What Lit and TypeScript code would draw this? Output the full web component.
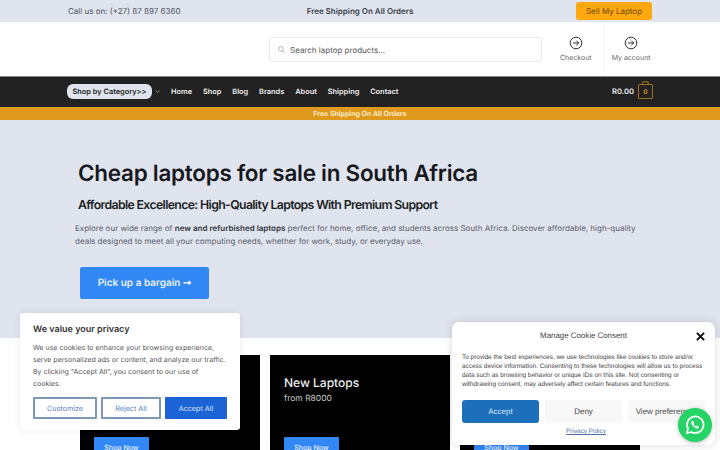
import { LitElement, html, css, svg } from 'lit';
import { customElement } from 'lit/decorators.js';

const circleArrow = svg`<circle cx="12" cy="12" r="10" fill="none" stroke="#333" stroke-width="1.7"/><path d="M7.5 12h9M13 8.5l3.5 3.5-3.5 3.5" fill="none" stroke="#333" stroke-width="1.7" stroke-linecap="round" stroke-linejoin="round"/>`;

const cards = [
  { title: 'Used Laptops', sub: 'from R2000' },
  { title: 'New Laptops', sub: 'from R8000' },
  { title: 'Gaming Laptops', sub: 'from R5000' },
];

const navLinks = ['Home', 'Shop', 'Blog', 'Brands', 'About', 'Shipping', 'Contact'];

@customElement('app-root')
export class AppRoot extends LitElement {
  static styles = css`
    :host {
      display: block;
      position: relative;
      width: 720px;
      height: 450px;
      overflow: hidden;
      background: #fff;
      font-family: Inter, 'Liberation Sans', sans-serif;
      color: #222;
      text-rendering: geometricPrecision;
    }
    .topbar {
      height: 22px;
      background: #e0e4ee;
      display: grid;
      grid-template-columns: 1fr 1fr 1fr;
      align-items: center;
      padding: 0 68px;
      font-size: 8px;
      color: #4a4f5a;
    }
    .topbar .mid {
      text-align: center;
      font-weight: 600;
      color: #3a3f4a;
      white-space: nowrap;
    }
    .topbar .right {
      display: flex;
      justify-content: flex-end;
    }
    .sell {
      background: #ffa70f;
      color: #6a4a10;
      font-size: 8px;
      height: 18px;
      width: 76px;
      border-radius: 3px;
      display: flex;
      align-items: center;
      justify-content: center;
    }
    .header {
      height: 54px;
      display: flex;
      align-items: center;
      padding-left: 269px;
    }
    .search {
      width: 273px;
      height: 25px;
      margin-top: 1px;
      box-sizing: border-box;
      border: 1px solid #e6e8ee;
      border-radius: 3px;
      display: flex;
      align-items: center;
      gap: 5px;
      padding-left: 8px;
      font-size: 8px;
      color: #555;
    }
    .tool {
      display: flex;
      flex-direction: column;
      align-items: center;
      gap: 3px;
      font-size: 7px;
      color: #666;
      height: 100%;
      justify-content: center;
      box-sizing: border-box;
    }
    .tool svg { display: block; }
    .tool.one { margin-left: 18px; padding-right: 11px; }
    .tool.two { padding-left: 8px; border-left: 1px solid #f2f3f6; }
    .nav {
      height: 31px;
      box-sizing: border-box;
      border-top: 1px solid #888;
      background: #222;
      display: flex;
      align-items: center;
      padding: 0 67px 1px;
      color: #eee;
      font-size: 7.4px;
      font-weight: 600;
    }
    .cat {
      background: #e0e4ee;
      color: #222;
      height: 15px;
      width: 85px;
      border-radius: 6px;
      display: flex;
      align-items: center;
      justify-content: center;
      white-space: nowrap;
    }
    .chev { margin: 0 11px 0 3px; }
    .links { display: flex; gap: 10.9px; }
    .cart {
      margin-left: auto;
      display: flex;
      align-items: center;
      gap: 4px;
      font-size: 7.6px;
    }
    .bag {
      position: relative;
      width: 13px;
      height: 13px;
      border: 1px solid #a0701c;
      border-radius: 1px;
      color: #dd9a1c;
      font-size: 6.5px;
      display: flex;
      align-items: center;
      justify-content: center;
    }
    .bag::before {
      content: '';
      position: absolute;
      top: -4px;
      left: 3px;
      width: 5px;
      height: 3px;
      border: 1px solid #a0701c;
      border-bottom: 0;
      border-radius: 3px 3px 0 0;
    }
    .promo {
      height: 13px;
      background: #df9a1d;
      color: #fff3d8;
      font-size: 7px;
      font-weight: 600;
      display: flex;
      align-items: center;
      justify-content: center;
    }
    .hero {
      height: 218px;
      box-sizing: border-box;
      background: #e0e4ee;
      padding: 38px 75px 0;
    }
    h1 {
      margin: 0 0 0 3px;
      font-size: 22.45px;
      line-height: 32px;
      font-weight: 600;
      letter-spacing: -0.25px;
      color: #16181d;
      white-space: nowrap;
    }
    h2 {
      margin: 6px 0 0 3px;
      font-size: 12.3px;
      line-height: 18px;
      font-weight: 600;
      letter-spacing: -0.65px;
      color: #1d1f24;
      white-space: nowrap;
    }
    .hero p {
      margin: 8px 0 0;
      font-size: 8px;
      line-height: 13px;
      color: #5a5e68;
      width: 575px;
    }
    .hero p b { color: #33363d; font-weight: 600; }
    .cta {
      margin: 19px 0 0 5px;
      width: 129px;
      height: 32px;
      background: #3187f4;
      color: #e8f2ff;
      border-radius: 2px;
      font-size: 10px;
      font-weight: 600;
      display: flex;
      align-items: center;
      justify-content: center;
    }
    .cards {
      display: flex;
      gap: 10px;
      padding: 17px 80px 0;
    }
    .card {
      width: 180px;
      height: 120px;
      flex: none;
      box-sizing: border-box;
      background: #000;
      color: #eee;
      padding: 20px 14px 0;
    }
    .card h3 {
      margin: 0;
      font-size: 12px;
      line-height: 15px;
      font-weight: 500;
    }
    .card .sub {
      margin-top: 3px;
      font-size: 8.5px;
      line-height: 13px;
      color: #ccc;
    }
    .shop {
      margin-top: 31px;
      width: 55px;
      height: 20px;
      background: #3187f4;
      color: #e8f2ff;
      border-radius: 1px;
      font-size: 7px;
      font-weight: 500;
      display: flex;
      align-items: center;
      justify-content: center;
    }
    .privacy {
      position: absolute;
      left: 20px;
      top: 313px;
      width: 220px;
      height: 117px;
      box-sizing: border-box;
      background: #fff;
      border-radius: 3px;
      box-shadow: 0 0 8px rgba(0, 0, 0, 0.08);
      padding: 11px 13px;
    }
    .privacy h4 {
      margin: 0;
      font-size: 9px;
      line-height: 12px;
      font-weight: 600;
      color: #333;
    }
    .privacy p {
      margin: 6px 0 0;
      font-size: 7px;
      line-height: 12px;
      color: #555;
    }
    .pbtns {
      display: grid;
      grid-template-columns: 64px 60px 62px;
      gap: 4px;
      margin-top: 7px;
    }
    .pbtn {
      height: 22px;
      box-sizing: border-box;
      border: 2px solid #7c98b8;
      border-radius: 1px;
      font-size: 7.2px;
      color: #5b82c4;
      display: flex;
      align-items: center;
      justify-content: center;
    }
    .pbtn.on {
      background: #1c63d5;
      border-color: #1c63d5;
      color: #d8e6fb;
    }
    .consent {
      position: absolute;
      left: 452px;
      top: 322px;
      width: 263px;
      height: 123px;
      box-sizing: border-box;
      background: #fff;
      border-radius: 7px;
      box-shadow: 0 0 8px rgba(0, 0, 0, 0.15);
      padding: 8px 10px;
      font-family: 'Liberation Sans', Arial, sans-serif;
    }
    .consent .head {
      height: 12px;
      font-size: 7.9px;
      line-height: 12px;
      text-align: center;
      color: #444;
    }
    .consent .x {
      position: absolute;
      left: 244px;
      top: 10px;
    }
    .consent p {
      margin: 11px 0 0;
      font-size: 6.45px;
      line-height: 9px;
      color: #444;
    }
    .cbtns {
      display: grid;
      grid-template-columns: 77px 77px 77px;
      gap: 6px;
      margin-top: 11px;
    }
    .cbtn {
      height: 23px;
      border-radius: 3px;
      background: #f8f8f8;
      color: #444;
      font-size: 8px;
      display: flex;
      align-items: center;
      justify-content: center;
      white-space: nowrap;
      overflow: hidden;
    }
    .cbtn.on { background: #1e6fbb; color: #cfe2f5; }
    .policy {
      margin-top: 5px;
      padding-left: 5px;
      text-align: center;
      font-size: 6.4px;
      color: #4a72a8;
      text-decoration: underline;
    }
    .wa {
      position: absolute;
      left: 678px;
      top: 408px;
      width: 34px;
      height: 34px;
      border-radius: 50%;
      background: #25d366;
      box-shadow: 0 1px 4px rgba(0, 0, 0, 0.25);
      display: flex;
      align-items: center;
      justify-content: center;
    }
  `;

  render() {
    return html`
      <div class="topbar">
        <div>Call us on: (+27) 87 897 6360</div>
        <div class="mid">Free Shipping On All Orders</div>
        <div class="right"><div class="sell">Sell My Laptop</div></div>
      </div>
      <div class="header">
        <div class="search">
          <svg width="7" height="7" viewBox="0 0 24 24" fill="none" stroke="#999" stroke-width="2.5"><circle cx="10" cy="10" r="8"/><path d="M16 16l7 7"/></svg>
          Search laptop products...
        </div>
        <div class="tool one"><svg width="14" height="14" viewBox="0 0 24 24">${circleArrow}</svg>Checkout</div>
        <div class="tool two"><svg width="14" height="14" viewBox="0 0 24 24">${circleArrow}</svg>My account</div>
      </div>
      <div class="nav">
        <div class="cat">Shop by Category&gt;&gt;</div>
        <svg class="chev" width="5" height="5" viewBox="0 0 10 10" fill="none" stroke="#bbb" stroke-width="1.4"><path d="M1 3l4 4 4-4"/></svg>
        <div class="links">${navLinks.map((l) => html`<span>${l}</span>`)}</div>
        <div class="cart">R0.00 <span class="bag">0</span></div>
      </div>
      <div class="promo">Free Shipping On All Orders</div>
      <div class="hero">
        <h1>Cheap laptops for sale in South Africa</h1>
        <h2>Affordable Excellence: High-Quality Laptops With Premium Support</h2>
        <p>Explore our wide range of <b>new and refurbished laptops</b> perfect for home, office, and students across South Africa. Discover affordable, high-quality deals designed to meet all your computing needs, whether for work, study, or everyday use.</p>
        <div class="cta">Pick up a bargain ➞</div>
      </div>
      <div class="cards">
        ${cards.map(
          (c) => html`<div class="card">
            <h3>${c.title}</h3>
            <div class="sub">${c.sub}</div>
            <div class="shop">Shop Now</div>
          </div>`,
        )}
      </div>
      <div class="privacy">
        <h4>We value your privacy</h4>
        <p>We use cookies to enhance your browsing experience, serve personalized ads or content, and analyze our traffic. By clicking "Accept All", you consent to our use of cookies.</p>
        <div class="pbtns">
          <div class="pbtn">Customize</div>
          <div class="pbtn">Reject All</div>
          <div class="pbtn on">Accept All</div>
        </div>
      </div>
      <div class="consent">
        <div class="head">Manage Cookie Consent</div>
        <svg class="x" width="9" height="9" viewBox="0 0 10 10" stroke="#111" stroke-width="2.2"><path d="M1 1l8 8M9 1l-8 8"/></svg>
        <p>To provide the best experiences, we use technologies like cookies to store and/or access device information. Consenting to these technologies will allow us to process data such as browsing behavior or unique IDs on this site. Not consenting or withdrawing consent, may adversely affect certain features and functions.</p>
        <div class="cbtns">
          <div class="cbtn on">Accept</div>
          <div class="cbtn">Deny</div>
          <div class="cbtn">View preferences</div>
        </div>
        <div class="policy">Privacy Policy</div>
      </div>
      <div class="wa">
        <svg width="22" height="22" viewBox="0 0 24 24" fill="none"><path d="M3 21l1.4-5A9 9 0 1 1 8 19.6L3 21z" stroke="#fff" stroke-width="1.9" stroke-linejoin="round"/><path d="M9 7.5c-.9.4-1.3 1.3-1 2.4.7 2.8 3 5 5.7 5.8 1.1.3 2-.1 2.5-1 .2-.4.1-.8-.2-1l-1.5-.9c-.3-.2-.7-.1-.9.2l-.4.5c-1.3-.5-2.3-1.5-2.9-2.8l.5-.4c.3-.2.4-.6.2-.9L9.9 7.8c-.2-.3-.6-.4-.9-.3z" fill="#fff"/></svg>
      </div>
    `;
  }
}
